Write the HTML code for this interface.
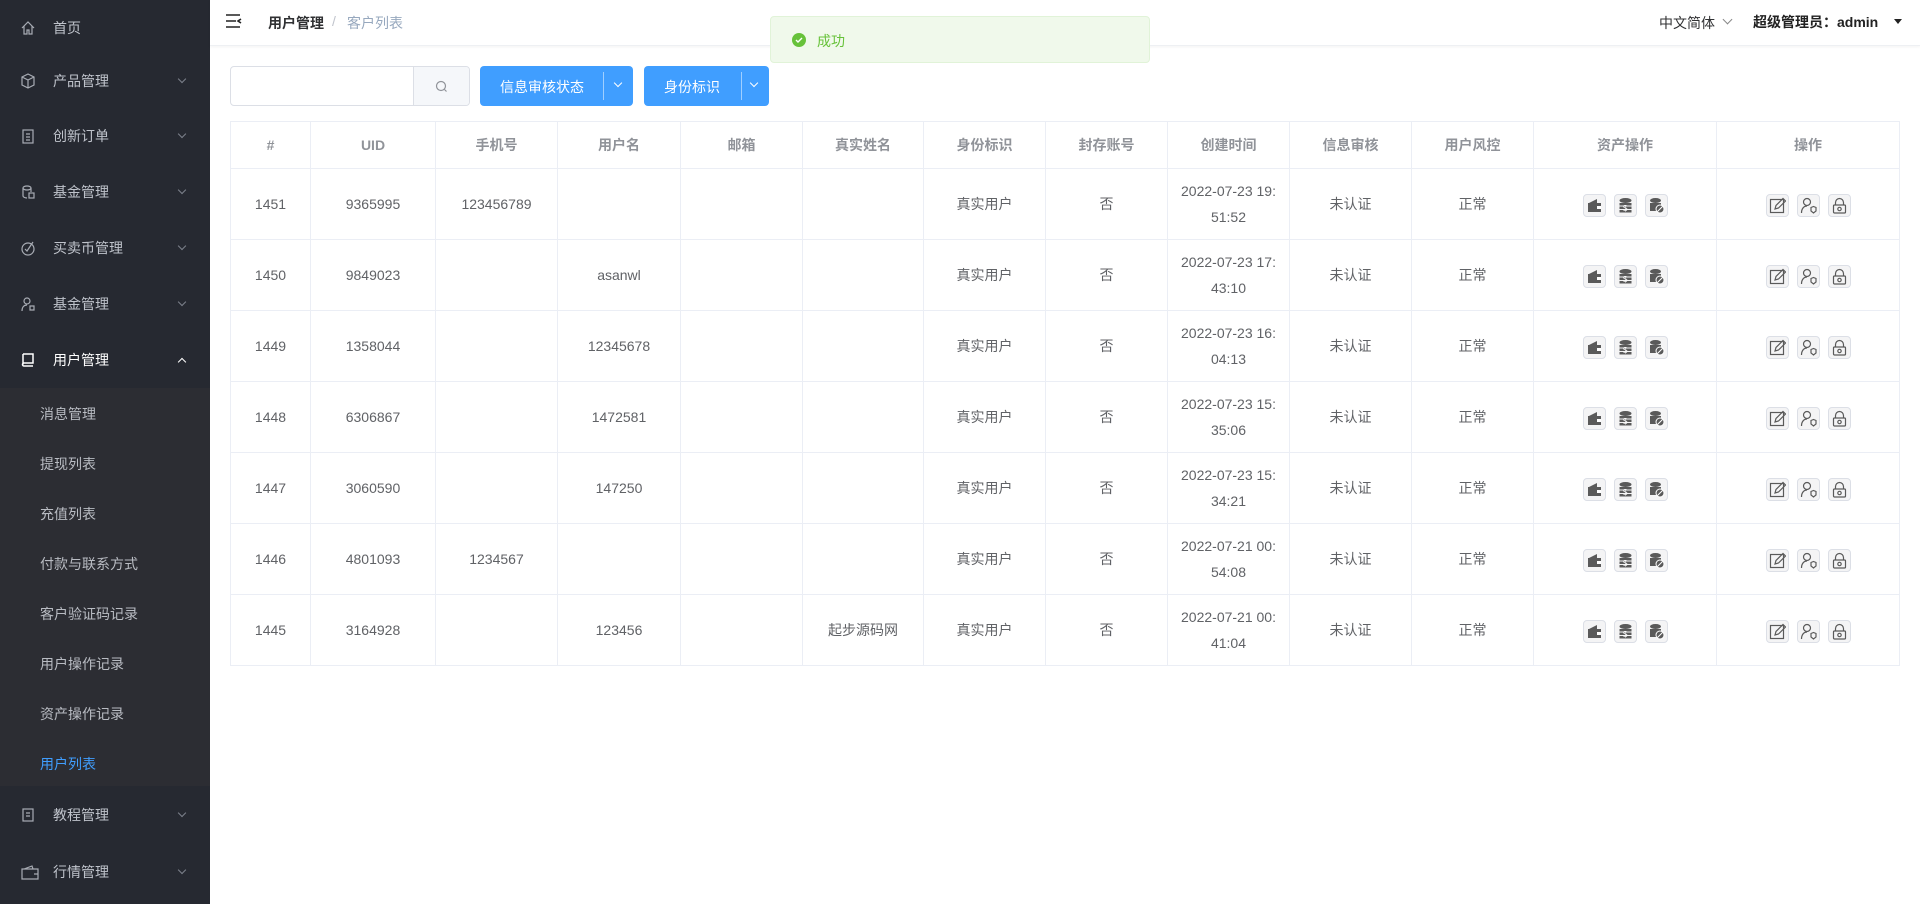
<!DOCTYPE html>
<html><head><meta charset="utf-8"><style>
*{margin:0;padding:0;box-sizing:border-box}
body{width:1920px;height:904px;overflow:hidden;font-family:"Liberation Sans","Noto Sans CJK SC",sans-serif;background:#fff;position:relative}
.side{position:absolute;left:0;top:0;width:210px;height:904px;background:#262931}
.mi{position:absolute;left:0;width:210px;height:56px;color:#bfc3cb;font-size:14px;display:flex;align-items:center}
.mi .ic{position:absolute;left:20px;width:16px;height:16px}
.mi .t{position:absolute;left:53px}
.mi .ch{position:absolute;left:179px;top:23px;width:6px;height:6px;border-right:1px solid #7d828c;border-bottom:1px solid #7d828c;transform:rotate(45deg)}
.mi .up{transform:rotate(-135deg);top:27px;border-color:#fff}
.sub{position:absolute;left:0;top:388px;width:210px;height:398px;background:#2c2d33}
.si{position:absolute;left:40px;font-size:14px;color:#b9bcc3}
.hdr{position:absolute;left:210px;top:0;right:0;height:46px;border-bottom:1px solid #eef0f3;box-shadow:0 1px 3px rgba(0,0,0,.05)}
.btn{position:absolute;top:66px;height:40px;background:#409eff;border-radius:4px;color:#fff;font-size:14px}
.btn .sep{position:absolute;top:6px;width:1px;height:28px;background:rgba(255,255,255,.5)}
.btn .dv{position:absolute;top:14px;width:6px;height:6px;border-right:1px solid #fff;border-bottom:1px solid #fff;transform:rotate(45deg)}
table{position:absolute;left:230px;top:121px;border-collapse:collapse;table-layout:fixed;width:1669px}
td,th{border:1px solid #ebeef5;text-align:center;font-size:14px;color:#606266;font-weight:normal;line-height:26px}
th{height:47px;color:#909399;font-weight:bold}
td{height:71px}
.ib{display:inline-block;width:23px;height:23px;border:1px solid #dcdfe6;border-radius:4px;margin:0 4px;vertical-align:middle;position:relative;background:#f4f4f5}
.ib svg{position:absolute;left:2px;top:2px}
</style></head><body>
<div class="side">
 <div class="mi" style="top:0"><svg class="ic" viewBox="0 0 16 16" fill="none" stroke="#a8acb4" stroke-width="1.2"><path d="M2 8L8 2l6 6M4 6v8h3v-4h2v4h3V6"/></svg><span class="t">首页</span></div>
 <div class="mi" style="top:53px"><svg class="ic" viewBox="0 0 16 16" fill="none" stroke="#a8acb4" stroke-width="1.2"><path d="M8 1l6 3v8l-6 3-6-3V4zM2 4l6 3 6-3M8 7v8"/></svg><span class="t">产品管理</span><i class="ch"></i></div>
 <div class="mi" style="top:108px"><svg class="ic" viewBox="0 0 16 16" fill="none" stroke="#a8acb4" stroke-width="1.2"><rect x="3" y="2" width="10" height="13"/><path d="M6 6h4M6 9h4M6 12h4"/></svg><span class="t">创新订单</span><i class="ch"></i></div>
 <div class="mi" style="top:164px"><svg class="ic" viewBox="0 0 16 16" fill="none" stroke="#a8acb4" stroke-width="1.2"><ellipse cx="7" cy="4" rx="4" ry="2"/><path d="M3 4v8c0 1 2 2 4 2M11 4v4"/><rect x="9" y="9" width="5" height="5"/></svg><span class="t">基金管理</span><i class="ch"></i></div>
 <div class="mi" style="top:220px"><svg class="ic" viewBox="0 0 16 16" fill="none" stroke="#a8acb4" stroke-width="1.2"><circle cx="8" cy="9" r="6"/><path d="M5 9l2 2 6-9"/></svg><span class="t">买卖币管理</span><i class="ch"></i></div>
 <div class="mi" style="top:276px"><svg class="ic" viewBox="0 0 16 16" fill="none" stroke="#a8acb4" stroke-width="1.2"><circle cx="7" cy="5" r="3"/><path d="M2 15c0-4 2-6 5-6M10 10h4v4h-4z"/></svg><span class="t">基金管理</span><i class="ch"></i></div>
 <div class="mi" style="top:332px;color:#fff"><svg class="ic" viewBox="0 0 16 16" fill="none" stroke="#fff" stroke-width="1.5"><path d="M3 2h10v9H4a1.5 1.5 0 000 3h9M3 2v10.5"/></svg><span class="t">用户管理</span><i class="ch up"></i></div>
 <div class="sub">
  <div class="si" style="top:16px">消息管理</div>
  <div class="si" style="top:66px">提现列表</div>
  <div class="si" style="top:116px">充值列表</div>
  <div class="si" style="top:166px">付款与联系方式</div>
  <div class="si" style="top:216px">客户验证码记录</div>
  <div class="si" style="top:266px">用户操作记录</div>
  <div class="si" style="top:316px">资产操作记录</div>
  <div class="si" style="top:366px;color:#409eff">用户列表</div>
 </div>
 <div class="mi" style="top:787px"><svg class="ic" viewBox="0 0 16 16" fill="none" stroke="#a8acb4" stroke-width="1.2"><rect x="3" y="2" width="10" height="12"/><path d="M6 6h4M6 9h4"/></svg><span class="t">教程管理</span><i class="ch"></i></div>
 <div class="mi" style="top:844px"><svg class="ic" viewBox="0 0 18 16" style="width:20px" fill="none" stroke="#a8acb4" stroke-width="1.2"><path d="M1 5h16v10H1zM3 5l8-3 1 3M13 10h4"/></svg><span class="t">行情管理</span><i class="ch"></i></div>
</div>
<div class="hdr">
 <svg style="position:absolute;left:16px;top:14px" width="16" height="14" viewBox="0 0 16 14" fill="none" stroke="#222" stroke-width="1.6"><path d="M0 1h14M0 7h10M0 13h14M15 5l-3 2 3 2"/></svg>
 <span style="position:absolute;left:58px;top:13px;font-size:14px;font-weight:bold;color:#303133">用户管理</span>
 <span style="position:absolute;left:122px;top:13px;font-size:14px;color:#c0c4cc">/</span>
 <span style="position:absolute;left:137px;top:13px;font-size:14px;color:#97a8be">客户列表</span>
 <span style="position:absolute;left:1449px;top:13px;font-size:14px;color:#303133">中文简体</span>
 <i style="position:absolute;left:1514px;top:16px;width:7px;height:7px;border-right:1px solid #888;border-bottom:1px solid #888;transform:rotate(45deg)"></i>
 <span style="position:absolute;left:1543px;top:12px;font-size:14px;font-weight:bold;color:#222">超级管理员：admin</span>
 <i style="position:absolute;left:1684px;top:19px;border:4px solid transparent;border-top:5px solid #222"></i>
</div>
<div style="position:absolute;left:770px;top:16px;width:380px;height:47px;background:#f0f9eb;border:1px solid #e1f3d8;border-radius:4px">
 <svg style="position:absolute;left:21px;top:16px" width="14" height="14" viewBox="0 0 14 14"><circle cx="7" cy="7" r="7" fill="#67c23a"/><path d="M4 7l2 2 4-4" stroke="#fff" stroke-width="1.4" fill="none"/></svg>
 <span style="position:absolute;left:46px;top:14px;font-size:14px;color:#67c23a">成功</span>
</div>
<div style="position:absolute;left:230px;top:66px;width:240px;height:40px;border:1px solid #dcdfe6;border-radius:4px;overflow:hidden">
 <div style="position:absolute;left:182px;top:0;width:58px;height:40px;background:#f5f7fa;border-left:1px solid #dcdfe6"></div>
 <svg style="position:absolute;left:204px;top:13px" width="13" height="13" viewBox="0 0 13 13" fill="none" stroke="#909399" stroke-width="1.2"><circle cx="6" cy="6" r="4.5"/><path d="M9.5 9.5l2 2"/></svg>
</div>
<div class="btn" style="left:480px;width:153px"><span style="position:absolute;left:20px;top:11px">信息审核状态</span><i class="sep" style="left:123px"></i><i class="dv" style="left:135px"></i></div>
<div class="btn" style="left:644px;width:125px"><span style="position:absolute;left:20px;top:11px">身份标识</span><i class="sep" style="left:97px"></i><i class="dv" style="left:107px"></i></div>
<table>
<colgroup><col style="width:80px"><col style="width:125px"><col style="width:122px"><col style="width:123px"><col style="width:122px"><col style="width:121px"><col style="width:122px"><col style="width:122px"><col style="width:122px"><col style="width:122px"><col style="width:122px"><col style="width:183px"><col style="width:183px"></colgroup>
<tr><th>#</th><th>UID</th><th>手机号</th><th>用户名</th><th>邮箱</th><th>真实姓名</th><th>身份标识</th><th>封存账号</th><th>创建时间</th><th>信息审核</th><th>用户风控</th><th>资产操作</th><th>操作</th></tr>
</table>
<script>
const rows=[["1451","9365995","123456789","","","","2022-07-23 19:<br>51:52"],["1450","9849023","","asanwl","","","2022-07-23 17:<br>43:10"],["1449","1358044","","12345678","","","2022-07-23 16:<br>04:13"],["1448","6306867","","1472581","","","2022-07-23 15:<br>35:06"],["1447","3060590","","147250","","","2022-07-23 15:<br>34:21"],["1446","4801093","1234567","","","","2022-07-21 00:<br>54:08"],["1445","3164928","","123456","","起步源码网","2022-07-21 00:<br>41:04"]];
const a1='<span class="ib"><svg width="17" height="17" viewBox="0 0 17 17"><path d="M2 6h13v9H2z" fill="#5a5a5a"/><path d="M3 6l8-4v4z" fill="#5a5a5a"/><rect x="11" y="9" width="4" height="3" fill="#fff"/></svg></span>';
const a2='<span class="ib"><svg width="17" height="17" viewBox="0 0 17 17" fill="#5a5a5a"><ellipse cx="8.5" cy="3.5" rx="6" ry="2.5"/><path d="M2.5 6h12v2.5h-12zM2.5 9.5h12V12h-12zM2.5 13h12v2.5h-12z"/><text x="6" y="14" font-size="8" fill="#fff" font-family="Liberation Sans">$</text></svg></span>';
const a3='<span class="ib"><svg width="17" height="17" viewBox="0 0 17 17"><ellipse cx="7.5" cy="3.5" rx="5.5" ry="2.5" fill="#5a5a5a"/><path d="M2 6h11v8H2z" fill="#5a5a5a"/><circle cx="12" cy="12" r="4" fill="#5a5a5a" stroke="#fff"/><path d="M9.5 14.5l5-5" stroke="#fff"/></svg></span>';
const o1='<span class="ib"><svg width="17" height="17" viewBox="0 0 17 17" fill="none" stroke="#5a5a5a" stroke-width="1.2"><rect x="1.5" y="2.5" width="13" height="13"/><path d="M6 12l1-3.5 7-7 2.5 2.5-7 7z"/></svg></span>';
const o2='<span class="ib"><svg width="17" height="17" viewBox="0 0 17 17" fill="none" stroke="#5a5a5a" stroke-width="1.2"><circle cx="7" cy="5" r="3.5"/><path d="M1.5 16c0-4.5 2.5-7 5.5-7M11 10.5l2.5-1 2.5 1v3.5l-2.5 2-2.5-2z"/></svg></span>';
const o3='<span class="ib"><svg width="17" height="17" viewBox="0 0 17 17" fill="none" stroke="#5a5a5a" stroke-width="1.2"><path d="M4.5 8V5.5a4 4 0 018 0V8"/><rect x="2.5" y="8" width="12" height="8" rx="1"/><circle cx="8.5" cy="12" r="1.7"/></svg></span>';
let h='';for(const r of rows){h+=`<tr><td>${r[0]}</td><td>${r[1]}</td><td>${r[2]}</td><td>${r[3]}</td><td>${r[4]}</td><td>${r[5]}</td><td>真实用户</td><td>否</td><td>${r[6]}</td><td>未认证</td><td>正常</td><td>${a1+a2+a3}</td><td>${o1+o2+o3}</td></tr>`}
document.querySelector('table tbody').insertAdjacentHTML('beforeend',h);
</script>
</body></html>
